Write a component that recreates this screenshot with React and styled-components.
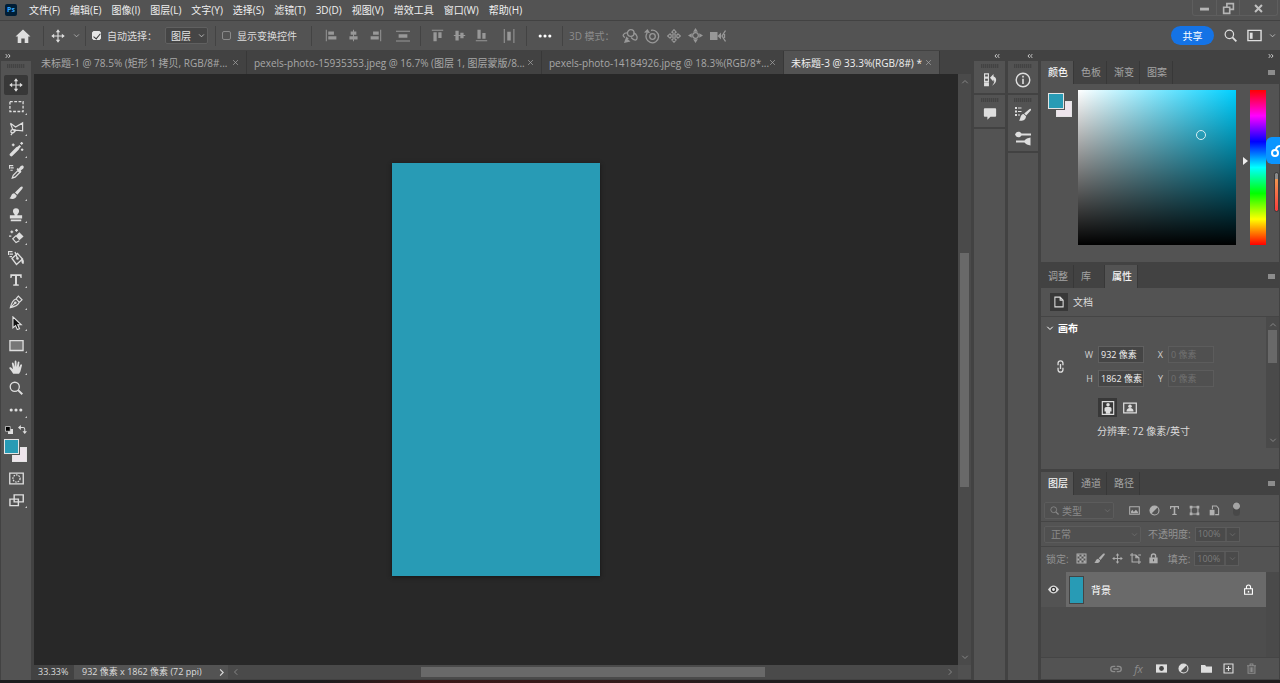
import React from 'react';
import styled, { createGlobalStyle } from 'styled-components';

const GlobalStyle = createGlobalStyle`
  * {
    box-sizing: border-box;
  }

  body {
    margin: 0;
    overflow: hidden;
    background: #535353;
    color: #dcdcdc;
    font-family: "Open Sans", "Noto Sans CJK SC", sans-serif;
    font-size: 10px;
    line-height: 14px;
  }

  button,
  input,
  select {
    margin: 0;
    padding: 0;
    border: 0;
    background: none;
    color: inherit;
    font: inherit;
  }
`;

/* Icons, all drawn on a 16x16 grid */

const solid = { fill: 'currentColor', stroke: 'none' };

const shapes = {
  home: <path {...solid} d="M8 1.500 .5 8.500h2.200V15h3.600v-4.500h3.400V15h3.600V8.500h2.200z" />,
  move: (
    <>
      <path d="M8 2v12M2 8h12" />
      <path {...solid} d="M8 .3 5.500 3.600h5zM8 15.700l-2.500-3.300h5zM.3 8l3.300-2.500v5zM15.700 8l-3.300-2.500v5z" />
    </>
  ),
  chevronDown: <path strokeWidth="2" d="M2.500 5.500 8 11l5.500-5.500" />,
  chevronUp: <path strokeWidth="2" d="M2.500 10.500 8 5l5.500 5.500" />,
  chevronLeft: <path strokeWidth="2" d="M10.500 2.500 5 8l5.500 5.500" />,
  chevronRight: <path strokeWidth="2" d="M5.500 2.500 11 8l-5.500 5.500" />,
  doubleLeft: <path strokeWidth="2.600" d="M7 3 2.500 8 7 13M14 3 9.500 8l4.500 5" />,
  doubleRight: <path strokeWidth="2.600" d="M2 3l4.500 5L2 13M9 3l4.500 5L9 13" />,
  close: <path strokeWidth="1.600" d="M2.500 2.500l11 11M13.500 2.500l-11 11" />,
  dots: (
    <g {...solid}>
      <circle cx="2.500" cy="8" r="1.800" />
      <circle cx="8" cy="8" r="1.800" />
      <circle cx="13.500" cy="8" r="1.800" />
    </g>
  ),
  alignLeft: <path {...solid} d="M1 1h1.200v14H1zM4 3h7v4H4zM4 9h10v4H4z" />,
  alignCenter: <path {...solid} d="M7.400 1h1.200v14H7.400zM4.500 3h7v4h-7zM3 9h10v4H3z" />,
  alignRight: <path {...solid} d="M13.800 1H15v14h-1.200zM5 3h7v4H5zM2 9h10v4H2z" />,
  distributeV: <path {...solid} d="M0 2h16v1.200H0zM3 6h10v4H3zM0 13h16v1.200H0z" />,
  alignTop: <path {...solid} d="M1 1h14v1.200H1zM3 4h4v11H3zM9 4h4v7H9z" />,
  alignMiddle: <path {...solid} d="M1 7.400h14v1.200H1zM3 2h4v12H3zM9 4.500h4v7H9z" />,
  alignBottom: <path {...solid} d="M1 13.800h14V15H1zM3 1h4v11H3zM9 5h4v7H9z" />,
  distributeH: <path {...solid} d="M2 0h1.200v16H2zM6 3h4v10H6zM13 0h1.200v16H13z" />,
  orbit: (
    <>
      <path d="M6 5C1.500 4.500-.500 8 3 9.500M11.500 5c4 1 4 5 3 6.500-1 1-3 .5-5.500-2" />
      <circle cx="8.800" cy="5" r="3.300" />
      <path {...solid} d="M4.500 8.500 7 11H5.500l3 2.500L2 15l1-3z" />
    </>
  ),
  roll: (
    <>
      <circle cx="8.500" cy="8.500" r="2.800" />
      <path d="M3.200 4.800A6.300 6.300 0 1 0 7 2.300" />
      <path {...solid} d="M0 4.500 3.500 1 6 5z" />
    </>
  ),
  pan: (
    <path d="M8 .8 5.500 3.500 7 4.500V7H4.500L3.500 5.500.8 8l2.700 2.500 1-1.500H7v2.500l-1.500 1L8 15.200l2.500-2.700-1.500-1V9h2.500l1 1.500L15.200 8l-2.700-2.500-1 1.500H9V4.500l1.500-1z" />
  ),
  slide: (
    <>
      <circle cx="8" cy="8" r="3" />
      <path {...solid} d="M8 0 5.500 4h5zM8 16l-2.500-4h5zM0 8l4-2.500v5zM16 8l-4-2.500v5z" />
    </>
  ),
  camera: (
    <>
      <path {...solid} d="M0 4h7.500v8H0zM7.500 8l3.500-3.500v7z" />
      <path d="M15.500 2.500 12 8l3.500 5.500M14.500 6v4" />
    </>
  ),
  search: (
    <>
      <circle cx="6.600" cy="6.600" r="5.200" strokeWidth="1.500" />
      <path strokeWidth="2.200" d="M10.400 10.400 15.200 15.200" />
    </>
  ),
  workspace: (
    <>
      <path strokeWidth="1.500" d="M1 2.500h14v11H1z" />
      <path {...solid} d="M3 5h3v6.500H3z" />
    </>
  ),
  minimize: <path {...solid} d="M2.500 7h11v3.500h-11z" />,
  restore: <path strokeWidth="2" d="M6 6V2h8v7h-4M2 6.500h7.500V14H2z" />,
  closeBold: <path strokeWidth="3" d="M3 3l10 10M13 3 3 13" />,
  marquee: <path strokeDasharray="3 1.600" strokeWidth="1.400" d="M1 2.700h14v10.600H1z" />,
  lasso: <path d="M1.500 2.500 7 6.500l7.500-4.500v8.500l-7-.8-3 3.300M1.500 2.500l2.500 6.500 3.500.7M4 9c-3 1-2.500 4 0 3.500 2.500-.5 2-3 0-3.500M4 12.500 2 15" />,
  wand: (
    <>
      <path strokeWidth="3.600" strokeLinecap="round" d="M2.500 13.500 9 7" />
      <path strokeWidth="2.400" d="M9.500 6.500 12 4" />
      <path d="M4.500 1.500v3M3 3h3M13.500 0v3M12 1.500h3M14 7v2.500M12.700 8.200h2.600" />
    </>
  ),
  dropper: (
    <>
      <path d="M3.500 15 4.500 12l5-5 2 2-5 5z" />
      <path {...solid} d="M8 5.500 9.300 4.300l1 .7 2-2.500c2.200-2.200 4.800.3 2.700 2.500L12.500 7l.8 1.200L12 9.500zM0 1h4.500v1.300H0zM1.500 3.500H5v1.300H1.500zM1.500 6H4v1.300H1.500zM0 1h1v4H0z" />
    </>
  ),
  brush: (
    <path {...solid} d="M15.300.8c.9.600.3 1.800-.3 2.500L9.500 10 6.800 7.500 13.200 1.200c.6-.6 1.400-.8 2.100-.4zM6 8.400l2.800 2.500C8.500 14.500 4 15.600.500 14c2.200-.5 1.500-5.200 5.500-5.600z" />
  ),
  stamp: (
    <path {...solid} d="M6.500 8.300c0-1.500-2-2.300-2-4.500a3.500 3.500 0 0 1 7 0c0 2.200-2 3-2 4.500H15V12H1V8.300zM2 13h12v2H2z" />
  ),
  eraser: (
    <>
      <path {...solid} d="M7 7.500l4-4 4.500 4.500-4.500 4z" />
      <path d="M7.500 7 4 10.500 7.500 14.500 11 12.500M3 1.500v3M1.500 3h3M0 7.500h2.500M8 0v3M6.500 1.500h3" />
    </>
  ),
  bucket: (
    <>
      <path d="M4 8.500l5.500-5 5 5.500-6 5.500zM7 2l2.500 6.500" />
      <path {...solid} d="M13.500 8c2 1 3 3 2 6-2 0-2.500-2.500-2-6zM0 1h4.500v1.300H0zM1.500 3.500H5v1.300H1.500zM1.500 6H4v1.300H1.500zM0 1h1v4H0z" />
      <circle {...solid} cx="9.500" cy="8.500" r="1.300" />
    </>
  ),
  type: <path {...solid} d="M1.500 1.500h13v4.300h-1.300l-.7-2.500H9.100v9.500l2.100.4v1.300H4.800v-1.300l2.100-.4V3.300H3.500l-.7 2.500H1.500z" />,
  pen: (
    <>
      <path d="M1.500 14.500C2.500 10 3.500 6 8 4.500l3.800 3.800C10.500 12.500 6 13.500 1.500 14.500zM1.500 14.500 6.800 9.200M8 4.500l2.700-3.200 4.200 4.200-3.100 2.800" />
      <circle {...solid} cx="7.200" cy="8.800" r="1.500" />
    </>
  ),
  pathSelect: <path fill="#111" stroke="#e0e0e0" d="M4.500 1v12.500l3-2.500L9.500 15.500l2.500-1L10 10h4z" />,
  rect: <path fill="#777" strokeWidth="1.400" d="M1 2.700h14v10.600H1z" />,
  hand: (
    <path {...solid} d="M4.800 15.800C3.500 13.500 2 11.500.5 9.800c-.7-1.200.8-2.200 1.900-1.200L4.600 10.500 3.300 4c-.2-1.500 1.600-1.700 2-.3L6.500 8V1.700C6.500.2 8.400.2 8.500 1.700L8.800 8l1.200-5.500c.3-1.400 2.100-1.100 1.900.3L11.200 8.800 13 5.500c.7-1.200 2.200-.5 1.800.8L13 13l-1.500 2.800z" />
  ),
  fgbgDefault: (
    <>
      <path {...solid} d="M6 6h10v10H6z" />
      <path fill="#000" strokeWidth="1.500" d="M1 1h9.500v9.500H1z" />
    </>
  ),
  swap: (
    <>
      <path strokeWidth="1.800" d="M3 4.500h6q3 0 3 3V13" />
      <path {...solid} d="M0 4.500 5 0v9zM12 16l-4-5h8z" />
    </>
  ),
  quickMask: (
    <>
      <path strokeWidth="1.400" d="M.800 2.200h14.400v11.600H.8z" />
      <circle cx="8" cy="8" r="3.800" strokeDasharray="1.800 1" />
    </>
  ),
  screenMode: <path fill="#535353" strokeWidth="1.500" d="M1 6.500h9v7H1zM5.500 2h9.700v7.500H5.500z" />,
  history: (
    <>
      <path d="M1.800 1h4.400v3.700H1.800zM1.800 5.800h4.400v3.700H1.800z" />
      <path {...solid} d="M1.200 10.500h5.600V15H1.200zM8 5.500 12 1v2.800c4.500 2 4 7.500-1.500 10.700 2.500-3.200 3-5.500 1.500-7V10z" />
    </>
  ),
  comment: <path {...solid} d="M1 2.500q0-1 1-1h12q1 0 1 1V10q0 1-1 1H8.500L5 14.500V11H2q-1 0-1-1z" />,
  info: (
    <>
      <circle cx="8" cy="8" r="6.800" strokeWidth="1.400" />
      <path {...solid} d="M7.200 3.800h1.600v1.700H7.200zM7.200 6.700h1.600V12H7.200z" />
    </>
  ),
  brushes: (
    <path {...solid} d="M0 1h2v2H0zM3 1.500h3.500v1H3zM0 4.500h2v2H0zM3 5h3.500v1H3zM0 8h2v2H0zM3 8.500h2v1H3zM15.800 3c.6.6 0 1.400-.5 1.900L11.200 9.500 9.200 7.500 14 3.400c.7-.6 1.300-.9 1.800-.4zM8.600 8 11 10.300c0 3.900-4 5.200-7 4.300 1.600-1 1-6.300 4.600-6.600z" />
  ),
  brushSettings: (
    <path {...solid} d="M0 4.500C1.500 1 5 1 6.500 3.500H16v2H6.500C5 8 1.500 8 0 4.500zM1 10.500h8.500C10.500 9 13 7.800 15.500 7.500V15.500C13 15.200 10.500 14 9.500 12.500H1z" />
  ),
  file: <path strokeWidth="1.400" d="M2.500 1.500h7L13.500 5.500v9h-11zM9.500 1.500v4h4" />,
  link: (
    <path strokeWidth="1.600" d="M5 6.500V4a3 3 0 0 1 6 0v2.500M5 9.500V12a3 3 0 0 0 6 0V9.500M8 5v6" />
  ),
  portrait: (
    <>
      <path d="M1.500.700h13v14.600h-13z" />
      <circle {...solid} cx="8" cy="4.300" r="2" />
      <path {...solid} d="M4 8.500q0-2 4-2t4 2V12h-1.500v2.500h-5V12H4z" />
    </>
  ),
  landscape: (
    <>
      <path strokeWidth="1.400" d="M.8 2.500h14.400v11H.8z" />
      <circle {...solid} cx="8" cy="6" r="2" />
      <path {...solid} d="M4 12q0-4 4-4t4 4z" />
    </>
  ),
  image: (
    <>
      <path strokeWidth="1.500" d="M1 2.500h14v11H1z" />
      <path {...solid} d="M3 12V9l2-2 2 3 3-3 3 3v2z" />
    </>
  ),
  adjust: (
    <>
      <circle cx="8" cy="8" r="6.500" strokeWidth="1.600" />
      <path {...solid} d="M12.700 3.300A6.600 6.600 0 0 0 3.300 12.700z" />
    </>
  ),
  frame: (
    <>
      <path strokeWidth="1.500" d="M3 3h10v10H3z" />
      <path {...solid} d="M1 1h4v4H1zM11 1h4v4h-4zM1 11h4v4H1zM11 11h4v4h-4z" />
    </>
  ),
  smart: (
    <>
      <path strokeWidth="1.500" d="M5 6V1.500h6L14 5v9H9" />
      <path {...solid} d="M1 7h7v8H1z" />
    </>
  ),
  checker: (
    <>
      <path strokeWidth="1.500" d="M1.500 1.500h13v13h-13z" />
      <path {...solid} d="M2 2h3v3H2zM8 2h3v3H8zM5 5h3v3H5zM11 5h3v3h-3zM2 8h3v3H2zM8 8h3v3H8zM5 11h3v3H5zM11 11h3v3h-3z" />
    </>
  ),
  artboard: <path strokeWidth="1.500" d="M3 0v13h13M0 3h8.500L13 7v9M8.500 3v4H13M12 3h4" />,
  lock: (
    <>
      <path strokeWidth="2" d="M5 7V4.500a3 3 0 0 1 6 0V7" />
      <path {...solid} d="M2 6.500h12V15H2z" />
      <path stroke="#535353" strokeWidth="1.600" d="M8 9v3" />
    </>
  ),
  lockOutline: (
    <>
      <path strokeWidth="1.600" d="M5 7V4.500a3 3 0 0 1 6 0V7M2.300 7h11.400v8H2.300z" />
      <path {...solid} d="M7 10h2v2.500H7z" />
    </>
  ),
  eye: (
    <>
      <path {...solid} d="M0 8q8-11.500 16 0-8 11.500-16 0z" />
      <circle cx="8" cy="8" r="3" fill="#e8e8e8" stroke="#333" strokeWidth="1.800" />
    </>
  ),
  chain: <path strokeWidth="1.800" d="M7 4.500H4.500a3.500 3.500 0 0 0 0 7H7M9 4.500h2.500a3.500 3.500 0 0 1 0 7H9M4.500 8h7" />,
  mask: (
    <>
      <path {...solid} d="M0 2h16v12H0z" />
      <circle cx="8" cy="8" r="3.500" fill="#444" stroke="none" />
    </>
  ),
  folder: <path {...solid} d="M0 3h6l1.500 2H16v9H0z" />,
  plus: <path strokeWidth="1.600" d="M1.500 1.500h13v13h-13zM8 4.500v7M4.500 8h7" />,
  trash: <path strokeWidth="1.500" d="M1.500 4h13M6 3.500V1.500h4v2M3 4v11h10V4M6 6v7M8 6v7M10 6v7" />,
};

const Svg = styled.svg`
  display: block;
  flex: none;
  fill: none;
  stroke: currentColor;
  stroke-width: 1.3;
  pointer-events: none;
`;

function Icon({ name, size = 13 }) {
  return (
    <Svg width={size} height={size} viewBox="0 0 16 16" aria-hidden="true">
      {shapes[name]}
    </Svg>
  );
}

/* Shared controls */

const IconButton = styled.button`
  display: flex;
  align-items: center;
  justify-content: center;
  flex: none;
  width: ${props => props.$width || 22}px;
  height: ${props => props.$height || 18}px;
  color: ${props => props.$color || '#dedede'};
  background: ${props => (props.$active ? '#383838' : 'transparent')};
`;

const Separator = styled.div`
  flex: none;
  width: 1px;
  height: 20px;
  margin: 0 ${props => props.$after || 0}px 0 ${props => props.$before || 0}px;
  background: #434343;
`;

const Grip = styled.div`
  width: 18px;
  height: 4px;
  margin: 3px auto 0;
  flex: none;
  background: repeating-linear-gradient(90deg, #434343 0 1px, #4d4d4d 1px 2px);
`;

const SelectFrame = styled.div`
  display: grid;
  align-items: center;
  flex: none;
  width: ${props => props.$width}px;
  height: 17px;
  border: 1px solid ${props => (props.$dim ? '#5c5c5c' : '#606060')};
  border-radius: 2px;
  background: ${props => (props.$dim ? '#505050' : '#454545')};
  color: ${props => (props.$dim ? '#8a8a8a' : '#e4e4e4')};

  > * {
    grid-area: 1 / 1;
  }

  > svg:last-child {
    justify-self: end;
    margin-right: 2px;
    opacity: ${props => (props.$dim ? 0.5 : 0.8)};
  }
`;

const SelectInput = styled.select`
  appearance: none;
  width: 100%;
  height: 15px;
  padding-left: ${props => props.$inset || 5}px;
  outline: 0;
  line-height: 14px;
`;

const LeadingIcon = styled.span`
  padding-left: 5px;
`;

function Dropdown({ label, value, width, inset, dim, icon }) {
  return (
    <SelectFrame $width={width} $dim={dim}>
      <SelectInput aria-label={label} $inset={inset} defaultValue={value}>
        <option>{value}</option>
      </SelectInput>
      {icon && <LeadingIcon><Icon name={icon} size={9} /></LeadingIcon>}
      <Icon name="chevronDown" size={7} />
    </SelectFrame>
  );
}

const CheckLabel = styled.label`
  display: flex;
  align-items: center;
  gap: 6px;
  white-space: nowrap;
`;

const Checkbox = styled.input`
  appearance: none;
  display: grid;
  place-items: center;
  width: 9px;
  height: 9px;
  border: 1px solid #8a8a8a;
  border-radius: 2px;

  &:checked {
    border-color: #e6e6e6;
    background: #e6e6e6;
  }

  &:checked::before {
    content: "";
    width: 3px;
    height: 6px;
    margin-bottom: 1px;
    border: solid #333;
    border-width: 0 1px 1px 0;
    transform: rotate(40deg);
  }
`;

const Scrollbar = styled.div`
  display: flex;
  flex: none;
  align-items: center;
  flex-direction: ${props => (props.$horizontal ? 'row' : 'column')};
  padding: ${props => (props.$horizontal ? '0 4px' : '4px 0')};
  background: #4a4a4a;
  color: #858585;
  ${props => (props.$horizontal ? 'flex: 1; height: 14px;' : 'width: 13px;')}
`;

const Track = styled.div`
  display: grid;
  flex: 1;
  align-self: stretch;
  padding: ${props => (props.$horizontal ? '2px 0' : '0 2px')};
  ${props => (props.$horizontal ? 'grid-template-columns' : 'grid-template-rows')}:
    ${props => props.$before}fr ${props => props.$size}fr ${props => props.$after}fr;
`;

const Thumb = styled.div`
  ${props => (props.$horizontal ? 'grid-column' : 'grid-row')}: 2;
  background: #696969;
`;

function Scroller({ horizontal, before, size, after }) {
  return (
    <Scrollbar $horizontal={horizontal}>
      <Icon name={horizontal ? 'chevronLeft' : 'chevronUp'} size={8} />
      <Track $horizontal={horizontal} $before={before} $size={size} $after={after}>
        <Thumb $horizontal={horizontal} />
      </Track>
      <Icon name={horizontal ? 'chevronRight' : 'chevronDown'} size={8} />
    </Scrollbar>
  );
}

/* Title bar */

const AppShell = styled.div`
  position: relative;
  display: flex;
  flex-direction: column;
  height: 100vh;
`;

const TitleBar = styled.header`
  display: flex;
  flex: none;
  height: 21px;
  padding-left: 5px;
  border-bottom: 1px solid #424242;
`;

const Logo = styled.div`
  width: 12px;
  height: 12px;
  margin: 4px 12px 0 0;
  border-radius: 2px;
  background: #001e36;
  color: #31a8ff;
  font-size: 7px;
  font-weight: 700;
  line-height: 11px;
  text-align: center;
`;

const Menu = styled.nav`
  display: flex;
  gap: 10px;
  height: 19px;
  align-items: center;
`;

const MenuItem = styled.button`
  color: #f0f0f0;
  white-space: nowrap;
`;

const WindowButtons = styled.div`
  display: flex;
  height: 16px;
  margin: 0 2px 0 auto;
  border: 1px solid #5e5e5e;
  border-top: 0;
  border-radius: 0 0 3px 3px;

  > button + button {
    border-left: 1px solid #5e5e5e;
  }
`;

const menus = [
  '文件(F)', '编辑(E)', '图像(I)', '图层(L)', '文字(Y)', '选择(S)',
  '滤镜(T)', '3D(D)', '视图(V)', '增效工具', '窗口(W)', '帮助(H)',
];

function Header() {
  return (
    <TitleBar>
      <Logo>Ps</Logo>
      <Menu>
        {menus.map(menu => <MenuItem key={menu}>{menu}</MenuItem>)}
      </Menu>
      <WindowButtons>
        <IconButton aria-label="最小化" $width={23} $height={16} $color="#b5b5b5"><Icon name="minimize" size={13} /></IconButton>
        <IconButton aria-label="还原" $width={23} $height={16} $color="#b5b5b5"><Icon name="restore" size={13} /></IconButton>
        <IconButton aria-label="关闭" $width={38} $height={16} $color="#c0c0c0"><Icon name="closeBold" size={11} /></IconButton>
      </WindowButtons>
    </TitleBar>
  );
}

/* Options bar */

const OptionsBar = styled.div`
  display: flex;
  flex: none;
  align-items: center;
  height: 30px;
  padding-left: 3px;
  border-bottom: 1px solid #424242;
`;

const OptionSelect = styled.div`
  margin: 0 7px 0 8px;
`;

const ModeLabel = styled.span`
  margin: 0 4px 0 6px;
  color: #8c8c8c;
`;

const OptionsEnd = styled.div`
  display: flex;
  align-items: center;
  gap: 4px;
  margin-left: auto;
  padding-right: 4px;
`;

const ShareButton = styled.button`
  width: 43px;
  height: 19px;
  margin-right: 2px;
  border-radius: 10px;
  background: #1473e6;
  color: #fff;
`;

function Options() {
  const dim = '#989898';

  return (
    <OptionsBar>
      <IconButton aria-label="主页" $width={40}><Icon name="home" size={16} /></IconButton>
      <Separator />
      <IconButton aria-label="移动工具" $width={28}><Icon name="move" size={14} /></IconButton>
      <IconButton aria-label="工具预设" $width={8} $color="#b0b0b0"><Icon name="chevronDown" size={7} /></IconButton>
      <Separator $before={5} $after={6} />
      <CheckLabel><Checkbox type="checkbox" defaultChecked />自动选择：</CheckLabel>
      <OptionSelect><Dropdown label="选择目标" value="图层" width={43} /></OptionSelect>
      <Separator $after={6} />
      <CheckLabel><Checkbox type="checkbox" />显示变换控件</CheckLabel>
      <Separator $before={14} $after={8} />
      <IconButton aria-label="左对齐" $color={dim}><Icon name="alignLeft" /></IconButton>
      <IconButton aria-label="水平居中对齐" $color={dim}><Icon name="alignCenter" /></IconButton>
      <IconButton aria-label="右对齐" $color={dim}><Icon name="alignRight" /></IconButton>
      <IconButton aria-label="垂直分布" $width={34} $color={dim}><Icon name="distributeV" size={14} /></IconButton>
      <Separator $after={5} />
      <IconButton aria-label="顶对齐" $color={dim}><Icon name="alignTop" /></IconButton>
      <IconButton aria-label="垂直居中对齐" $color={dim}><Icon name="alignMiddle" /></IconButton>
      <IconButton aria-label="底对齐" $color={dim}><Icon name="alignBottom" /></IconButton>
      <IconButton aria-label="水平分布" $width={34} $color={dim}><Icon name="distributeH" size={14} /></IconButton>
      <Separator />
      <IconButton aria-label="更多选项" $width={35} $color="#fff"><Icon name="dots" size={14} /></IconButton>
      <Separator />
      <ModeLabel>3D 模式：</ModeLabel>
      <IconButton aria-label="环绕移动" $color={dim}><Icon name="orbit" size={16} /></IconButton>
      <IconButton aria-label="滚动" $color={dim}><Icon name="roll" size={16} /></IconButton>
      <IconButton aria-label="平移" $color={dim}><Icon name="pan" size={14} /></IconButton>
      <IconButton aria-label="滑动" $color={dim}><Icon name="slide" size={15} /></IconButton>
      <IconButton aria-label="变焦" $color={dim}><Icon name="camera" size={16} /></IconButton>
      <OptionsEnd>
        <ShareButton>共享</ShareButton>
        <IconButton aria-label="搜索" $width={20}><Icon name="search" size={13} /></IconButton>
        <IconButton aria-label="工作区" $width={20}><Icon name="workspace" size={15} /></IconButton>
        <IconButton aria-label="选择工作区" $width={8} $color="#c0c0c0"><Icon name="chevronDown" size={7} /></IconButton>
      </OptionsEnd>
    </OptionsBar>
  );
}

/* Tool bar */

const Workspace = styled.main`
  display: flex;
  flex: 1;
  min-height: 0;
  background: #424242;
`;

const Column = styled.div`
  display: flex;
  flex: none;
  flex-direction: column;
  width: ${props => props.$width}px;
  margin: 0 ${props => props.$after || 0}px 0 ${props => props.$before || 0}px;
`;

const CollapseStrip = styled.div`
  display: flex;
  flex: none;
  align-items: center;
  justify-content: ${props => (props.$start ? 'flex-start' : 'flex-end')};
  height: 10px;
  padding: 0 5px;
  color: #d0d0d0;
`;

const ToolBody = styled.aside`
  display: flex;
  flex: 1;
  flex-direction: column;
  margin: 0 3px 0 1px;
  background: #535353;
`;

const ToolList = styled.div`
  display: grid;
  grid-auto-rows: 1fr;
  height: 347px;
  margin-top: 6px;
`;

const Tool = styled.button`
  display: flex;
  align-items: center;
  justify-content: center;
  position: relative;
  width: 24px;
  height: 20px;
  margin: auto 3px;
  border-radius: 2px;
  background: ${props => (props.$active ? '#383838' : 'transparent')};
  color: #dedede;

  &::after {
    content: "";
    display: ${props => (props.$group ? 'block' : 'none')};
    position: absolute;
    right: 1px;
    bottom: 2px;
    border: 1px solid #c8c8c8;
    border-top-color: transparent;
    border-left-color: transparent;
  }
`;

const MiniRow = styled.div`
  display: flex;
  justify-content: space-between;
  padding: 4px 4px 5px 3px;
`;

const Swatches = styled.div`
  position: relative;
  width: ${props => props.$size + 8}px;
  height: ${props => props.$size + 8}px;
  margin: 0 3px;
  flex: none;
`;

const Swatch = styled.button`
  position: absolute;
  ${props => (props.$back ? 'right: 0; bottom: 0;' : 'top: 0; left: 0;')}
  width: ${props => props.$size}px;
  height: ${props => props.$size}px;
  border: 1px solid #e4e4e4;
  outline: ${props => (props.$back ? '0' : '1px solid #555')};
  background: ${props => props.$color};
`;

function ColorSwatches({ size }) {
  return (
    <Swatches $size={size}>
      <Swatch aria-label="背景色" $size={size} $back $color="#eee5ec" />
      <Swatch aria-label="前景色" $size={size} $color="#289bb5" />
    </Swatches>
  );
}

const ToolFooter = styled.div`
  display: flex;
  flex-direction: column;
  gap: 2px;
  padding-top: 6px;
`;

const tools = [
  ['move', '移动工具', 14, false],
  ['marquee', '矩形选框工具', 15, true],
  ['lasso', '多边形套索工具', 15, true],
  ['wand', '魔棒工具', 15, true],
  ['dropper', '吸管工具', 15, false],
  ['brush', '画笔工具', 14, true],
  ['stamp', '仿制图章工具', 14, true],
  ['eraser', '橡皮擦工具', 15, true],
  ['bucket', '油漆桶工具', 16, false],
  ['type', '横排文字工具', 14, true],
  ['pen', '钢笔工具', 14, true],
  ['pathSelect', '路径选择工具', 14, true],
  ['rect', '矩形工具', 15, true],
  ['hand', '抓手工具', 14, true],
  ['search', '缩放工具', 14, false],
  ['dots', '编辑工具栏', 14, true],
];

function Toolbar() {
  return (
    <Column $width={34}>
      <CollapseStrip $start><Icon name="doubleRight" size={6} /></CollapseStrip>
      <ToolBody>
        <Grip />
        <ToolList>
          {tools.map(([icon, label, size, group], index) => (
            <Tool key={icon} aria-label={label} $active={index === 0} $group={group}>
              <Icon name={icon} size={size} />
            </Tool>
          ))}
        </ToolList>
        <MiniRow>
          <IconButton aria-label="默认颜色" $width={9} $height={9}><Icon name="fgbgDefault" size={8} /></IconButton>
          <IconButton aria-label="切换颜色" $width={9} $height={9}><Icon name="swap" size={9} /></IconButton>
        </MiniRow>
        <ColorSwatches size={15} />
        <ToolFooter>
          <Tool aria-label="快速蒙版"><Icon name="quickMask" size={15} /></Tool>
          <Tool aria-label="屏幕模式" $group><Icon name="screenMode" size={15} /></Tool>
        </ToolFooter>
      </ToolBody>
    </Column>
  );
}

/* Document window */

const DocumentArea = styled.section`
  display: flex;
  flex: 1;
  flex-direction: column;
  min-width: 0;
`;

const DocumentTabs = styled.div`
  display: flex;
  flex: none;
  height: 23px;
`;

const DocumentTab = styled.div`
  display: flex;
  align-items: center;
  justify-content: space-between;
  width: ${props => props.$width}px;
  padding: 0 7px;
  border-right: 1px solid #383838;
  background: ${props => (props.$active ? '#535353' : '#424242')};
  color: ${props => (props.$active ? '#f0f0f0' : '#a8a8a8')};
  white-space: nowrap;
`;

const Stage = styled.div`
  display: flex;
  flex: 1;
  min-height: 0;
`;

const Canvas = styled.div`
  display: flex;
  flex: 1;
  align-items: center;
  justify-content: center;
  background: #282828;
`;

const Artboard = styled.div`
  height: 70%;
  aspect-ratio: 932 / 1862;
  background: #289bb5;
  box-shadow: 0 1px 4px #151515;
`;

const StatusBar = styled.footer`
  display: flex;
  flex: none;
  height: 14px;
  margin-bottom: 1px;
  color: #dcdcdc;
  font-size: 9px;
`;

const ZoomInput = styled.input`
  width: 40px;
  padding-left: 4px;
`;

const DocumentInfo = styled.button`
  display: flex;
  align-items: center;
  justify-content: space-between;
  width: 154px;
  padding: 0 2px 0 8px;
  background: #535353;
  line-height: 14px;
  white-space: nowrap;
`;

const ScrollCorner = styled.div`
  width: 13px;
  background: #505050;
`;

const documents = [
  { title: '未标题-1 @ 78.5% (矩形 1 拷贝, RGB/8#...', width: 213 },
  { title: 'pexels-photo-15935353.jpeg @ 16.7% (图层 1, 图层蒙版/8...', width: 295 },
  { title: 'pexels-photo-14184926.jpeg @ 18.3%(RGB/8*...', width: 242 },
  { title: '未标题-3 @ 33.3%(RGB/8#) *', width: 156, active: true },
];

function DocumentWindow() {
  return (
    <DocumentArea>
      <DocumentTabs>
        {documents.map(doc => (
          <DocumentTab key={doc.title} $width={doc.width} $active={doc.active}>
            <span>{doc.title}</span>
            <IconButton aria-label="关闭" $width={7} $color="#a8a8a8"><Icon name="close" size={7} /></IconButton>
          </DocumentTab>
        ))}
      </DocumentTabs>
      <Stage>
        <Canvas><Artboard /></Canvas>
        <Scroller before={166} size={232} after={165} />
      </Stage>
      <StatusBar>
        <ZoomInput aria-label="缩放" defaultValue="33.33%" />
        <DocumentInfo>
          932 像素 x 1862 像素 (72 ppi)
          <Icon name="chevronRight" size={9} />
        </DocumentInfo>
        <Scroller horizontal before={180} size={343} after={180} />
        <ScrollCorner />
      </StatusBar>
    </DocumentArea>
  );
}

/* Collapsed docks */

const DockGroup = styled.div`
  display: flex;
  flex-direction: column;
  align-items: center;
  padding-bottom: 1px;
  border-bottom: 2px solid #424242;
  background: #535353;
`;

const DockRest = styled.div`
  flex: 1;
  background: #535353;
`;

function Dock({ width, groups }) {
  return (
    <Column $width={width} $before={3}>
      <CollapseStrip><Icon name="doubleLeft" size={6} /></CollapseStrip>
      {groups.map(group => (
        <DockGroup key={group[0]}>
          <Grip />
          {group.map(icon => (
            <IconButton key={icon} aria-label={icon} $width={26} $height={24}>
              <Icon name={icon} size={icon === 'comment' || icon === 'history' ? 14 : 16} />
            </IconButton>
          ))}
        </DockGroup>
      ))}
      <DockRest />
    </Column>
  );
}

/* Panels */

const Panel = styled.section`
  display: flex;
  flex-direction: column;
  flex: ${props => (props.$grow ? '1' : 'none')};
  min-height: 0;
  margin-bottom: ${props => (props.$grow ? 1 : 3)}px;
  background: #535353;
`;

const PanelTabs = styled.div`
  display: flex;
  align-items: center;
  flex: none;
  height: 23px;
  padding-right: 4px;
  background: #424242;
`;

const PanelTab = styled.button`
  min-width: 31px;
  height: 23px;
  padding: 0 5px 2px 7px;
  border-right: 1px solid #383838;
  background: ${props => (props.$active ? '#535353' : 'transparent')};
  color: ${props => (props.$active ? '#f4f4f4' : '#a4a4a4')};
  font-weight: ${props => (props.$active ? 500 : 400)};
  text-align: left;
`;

const PanelMenu = styled.button`
  width: 7px;
  height: 5px;
  margin-left: auto;
  background: #8c8c8c;
`;

function Tabs({ names, active }) {
  return (
    <PanelTabs>
      {names.map(name => (
        <PanelTab key={name} $active={name === active}>{name}</PanelTab>
      ))}
      <PanelMenu aria-label="面板菜单" />
    </PanelTabs>
  );
}

const ColorBody = styled.div`
  display: flex;
  padding: 6px 13px 17px 4px;
`;

const SwatchInset = styled.div`
  padding-top: 3px;
`;

const ColorField = styled.div`
  position: relative;
  flex: 1;
  height: 155px;
  margin: 0 14px 0 3px;
  background:
    linear-gradient(to bottom, transparent, #000),
    linear-gradient(to right, #fff, #00d0ff);
`;

const ColorCursor = styled.div`
  position: absolute;
  top: 29%;
  left: 78%;
  width: 10px;
  height: 10px;
  margin: -5px;
  border: 1px solid #d8eef2;
  border-radius: 50%;
`;

const HueBar = styled.div`
  position: relative;
  width: 16px;
  background: linear-gradient(#f00, #f0f, #00f, #0ff, #0f0, #ff0, #f00);
`;

const HueMarker = styled.div`
  position: absolute;
  top: 43%;
  left: -7px;
  border: solid transparent;
  border-width: 4px 0 4px 5px;
  border-left-color: #eee;
`;

function ColorPanel() {
  return (
    <Panel>
      <Tabs names={['颜色', '色板', '渐变', '图案']} active="颜色" />
      <ColorBody>
        <SwatchInset><ColorSwatches size={16} /></SwatchInset>
        <ColorField><ColorCursor /></ColorField>
        <HueBar><HueMarker /></HueBar>
      </ColorBody>
    </Panel>
  );
}

const DocumentRow = styled.div`
  display: flex;
  align-items: center;
  gap: 5px;
  height: 29px;
  padding-left: 9px;
  border-bottom: 1px solid #454545;
`;

const PropertiesScroll = styled.div`
  display: flex;
  height: 131px;
  margin-bottom: 21px;
`;

const PropertiesBody = styled.div`
  flex: 1;
  padding: 4px 0 0 5px;
`;

const SectionTitle = styled.h3`
  display: flex;
  align-items: center;
  gap: 4px;
  margin: 0;
  color: #fff;
  font-size: 10px;
  font-weight: 700;
`;

const Dimensions = styled.div`
  display: grid;
  grid-template-columns: 26px 15px 46px 14px 46px;
  column-gap: 5px;
  row-gap: 7px;
  align-items: center;
  padding: 11px 0 11px 1px;
  font-size: 9px;
`;

const LinkCell = styled.div`
  grid-row: 1 / 3;
  display: flex;
  justify-content: center;
`;

const FieldLabel = styled.label`
  text-align: right;
  color: #d0d0d0;
`;

const Field = styled.input`
  width: 100%;
  height: 17px;
  padding-left: 2px;
  border: 1px solid ${props => (props.disabled ? '#5c5c5c' : '#606060')};
  background: ${props => (props.disabled ? '#505050' : '#454545')};
  color: ${props => (props.disabled ? '#707070' : '#eee')};
`;

const Orientation = styled.div`
  display: flex;
  gap: 3px;
  padding-left: 52px;
`;

const Resolution = styled.div`
  padding: 7px 0 0 51px;
`;

function PropertiesPanel() {
  return (
    <Panel>
      <Tabs names={['调整', '库', '属性']} active="属性" />
      <DocumentRow>
        <IconButton aria-label="文档" $width={18} $active><Icon name="file" size={12} /></IconButton>
        文档
      </DocumentRow>
      <PropertiesScroll>
        <PropertiesBody>
          <SectionTitle><Icon name="chevronDown" size={8} />画布</SectionTitle>
          <Dimensions>
            <LinkCell><Icon name="link" size={13} /></LinkCell>
            <FieldLabel htmlFor="canvas-w">W</FieldLabel>
            <Field id="canvas-w" defaultValue="932 像素" />
            <FieldLabel htmlFor="canvas-x">X</FieldLabel>
            <Field id="canvas-x" defaultValue="0 像素" disabled />
            <FieldLabel htmlFor="canvas-h">H</FieldLabel>
            <Field id="canvas-h" defaultValue="1862 像素" />
            <FieldLabel htmlFor="canvas-y">Y</FieldLabel>
            <Field id="canvas-y" defaultValue="0 像素" disabled />
          </Dimensions>
          <Orientation>
            <IconButton aria-label="纵向" $width={19} $height={19} $active><Icon name="portrait" size={14} /></IconButton>
            <IconButton aria-label="横向" $width={19} $height={19}><Icon name="landscape" size={14} /></IconButton>
          </Orientation>
          <Resolution>分辨率: 72 像素/英寸</Resolution>
        </PropertiesBody>
        <Scroller before={1} size={33} after={72} />
      </PropertiesScroll>
    </Panel>
  );
}

const LayerControls = styled.div`
  display: flex;
  align-items: center;
  flex: none;
  height: ${props => props.$height || 25}px;
  padding: ${props => props.$above || 0}px 0 ${props => props.$below || 0}px ${props => props.$inset || 3}px;
  border-bottom: ${props => (props.$last ? 0 : 1)}px solid #454545;
  color: #929292;
`;

const FilterIcons = styled.div`
  display: flex;
  padding-left: ${props => props.$before}px;
`;

const FilterToggle = styled.input`
  appearance: none;
  width: 7px;
  height: 14px;
  margin: 0 0 4px 9px;
  border-radius: 4px;
  background: radial-gradient(circle at 50% 4px, #a4a4a4 3px, #484848 4px);
`;

const PercentLabel = styled.label`
  display: flex;
  align-items: center;
  gap: 4px;
  margin-left: ${props => props.$before}px;
  white-space: nowrap;
`;

const PercentField = styled.span`
  display: flex;
  height: 15px;
  border: 1px solid #5c5c5c;
  background: #4a4a4a;
  font-size: 9px;
`;

const PercentInput = styled.input`
  width: 31px;
  padding-left: 2px;
  border-right: 2px solid #575757;
  color: #7c7c7c;
`;

function Percent({ label, before }) {
  return (
    <PercentLabel $before={before}>
      {label}
      <PercentField>
        <PercentInput defaultValue="100%" />
        <IconButton as="span" $width={12} $height={13} $color="#6c6c6c"><Icon name="chevronDown" size={7} /></IconButton>
      </PercentField>
    </PercentLabel>
  );
}

const LayerList = styled.div`
  display: flex;
  flex: 1;
  min-height: 0;
  background: #4d4d4d;
`;

const LayerRows = styled.div`
  flex: 1;
`;

const LayerRow = styled.div`
  display: flex;
  height: 35px;
`;

const Visibility = styled.div`
  display: grid;
  place-items: center;
  width: 25px;
  background: #535353;
`;

const LayerInfo = styled.div`
  display: flex;
  align-items: center;
  flex: 1;
  padding: 0 12px 0 3px;
  background: #6a6a6a;
  color: #fff;
`;

const Thumbnail = styled.div`
  width: 15px;
  height: 28px;
  margin-right: 7px;
  border: 1px solid #444;
  background: #289bb5;
`;

const LayerLock = styled.div`
  margin-left: auto;
`;

const LayerGutter = styled.div`
  width: 13px;
  background: #4a4a4a;
`;

const LayerActions = styled.div`
  display: flex;
  align-items: center;
  justify-content: flex-end;
  flex: none;
  height: 22px;
  padding-right: 17px;
  border-top: 1px solid #454545;
`;

const EffectsButton = styled.button`
  width: 23px;
  color: #8c8c8c;
  font-size: 11px;
  font-style: italic;
`;

const filters = ['image', 'adjust', 'type', 'frame', 'smart'];
const locks = ['checker', 'brush', 'move', 'artboard', 'lock'];

function LayersPanel() {
  return (
    <Panel $grow>
      <Tabs names={['图层', '通道', '路径']} active="图层" />
      <LayerControls $height={27} $above={5}>
        <Dropdown label="筛选" value="类型" width={70} inset={17} dim icon="search" />
        <FilterIcons $before={10}>
          {filters.map(icon => (
            <IconButton key={icon} aria-label={icon} $width={20} $color="#b0b0b0"><Icon name={icon} size={11} /></IconButton>
          ))}
        </FilterIcons>
        <FilterToggle type="checkbox" aria-label="打开图层过滤" />
      </LayerControls>
      <LayerControls>
        <Dropdown label="混合模式" value="正常" width={97} inset={6} dim />
        <Percent label="不透明度:" before={7} />
      </LayerControls>
      <LayerControls $inset={5} $below={2} $last>
        锁定:
        <FilterIcons $before={4}>
          {locks.map(icon => (
            <IconButton key={icon} aria-label={icon} $width={18} $color="#b0b0b0"><Icon name={icon} size={11} /></IconButton>
          ))}
        </FilterIcons>
        <Percent label="填充:" before={5} />
      </LayerControls>
      <LayerList>
        <LayerRows>
          <LayerRow>
            <Visibility><Icon name="eye" size={11} /></Visibility>
            <LayerInfo>
              <Thumbnail />
              背景
              <LayerLock><Icon name="lockOutline" size={11} /></LayerLock>
            </LayerInfo>
          </LayerRow>
        </LayerRows>
        <LayerGutter />
      </LayerList>
      <LayerActions>
        <IconButton aria-label="链接图层" $width={23} $color="#8c8c8c"><Icon name="chain" size={12} /></IconButton>
        <EffectsButton aria-label="图层样式">fx</EffectsButton>
        <IconButton aria-label="添加蒙版" $width={22}><Icon name="mask" size={11} /></IconButton>
        <IconButton aria-label="调整图层" $width={23}><Icon name="adjust" size={11} /></IconButton>
        <IconButton aria-label="新建组" $width={22}><Icon name="folder" size={11} /></IconButton>
        <IconButton aria-label="新建图层" $width={23}><Icon name="plus" size={11} /></IconButton>
        <IconButton aria-label="删除图层" $width={22} $color="#8c8c8c"><Icon name="trash" size={11} /></IconButton>
      </LayerActions>
    </Panel>
  );
}

/* Desktop widgets docked over the right edge of the window */

const CloudWidget = styled.button`
  position: absolute;
  top: 137px;
  right: 0;
  display: flex;
  align-items: center;
  justify-content: flex-end;
  width: 14px;
  height: 27px;
  overflow: hidden;
  border-radius: 6px 0 0 6px;
  background: #0b95ff;
  color: #fff;
`;

const MeterWidget = styled.div`
  position: absolute;
  top: 172px;
  right: 1px;
  width: 5px;
  height: 40px;
  border: 1px solid #3c3c3c;
  border-radius: 3px;
  background: linear-gradient(#8a8a8a 16%, #f09550 17%, #fa3c3c);
`;

const TaskbarEdge = styled.div`
  flex: none;
  height: 3px;
  background: linear-gradient(90deg, #1c1c1e 25%, #3a1818 33%, #321a1a 50%, #201c1e 58%);
`;

export default function App() {
  return (
    <AppShell>
      <GlobalStyle />
      <Header />
      <Options />
      <Workspace>
        <Toolbar />
        <DocumentWindow />
        <Dock width={31} groups={[['history'], ['comment']]} />
        <Dock width={30} groups={[['info'], ['brushes', 'brushSettings']]} />
        <Column $width={238} $before={3} $after={1}>
          <CollapseStrip><Icon name="doubleRight" size={6} /></CollapseStrip>
          <ColorPanel />
          <PropertiesPanel />
          <LayersPanel />
        </Column>
      </Workspace>
      <TaskbarEdge />
      <CloudWidget aria-label="云盘">
        <Svg width="9" height="16" viewBox="0 0 9 16">
          <circle cx="4" cy="10" r="3" strokeWidth="2" />
          <path strokeWidth="2" d="M5 7c0-3 2-4 5-4" />
        </Svg>
      </CloudWidget>
      <MeterWidget />
    </AppShell>
  );
}
